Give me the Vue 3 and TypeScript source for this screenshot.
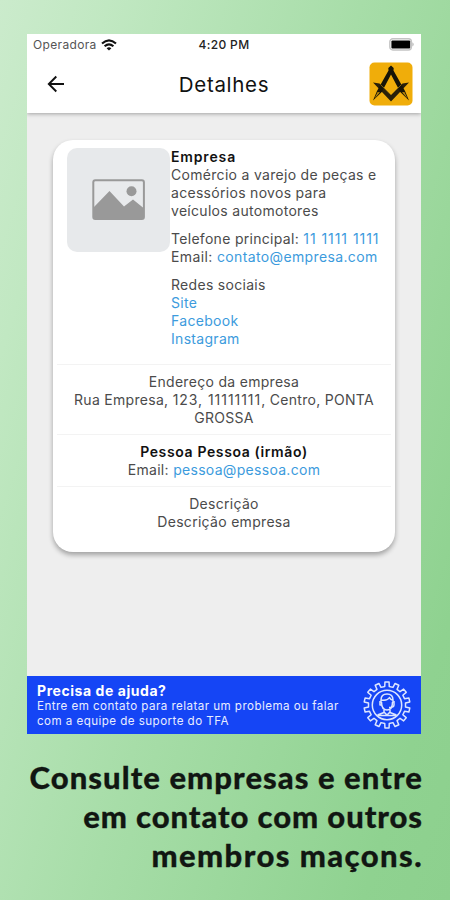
<script setup lang="ts">
interface Link { label: string; href: string }

const links: Link[] = [
  { label: 'Site', href: '#site' },
  { label: 'Facebook', href: '#facebook' },
  { label: 'Instagram', href: '#instagram' },
]

function gearPath(teeth: number, cx: number, cy: number, outer: number, inner: number): string {
  const step = (Math.PI * 2) / teeth
  const at = (r: number, a: number): string =>
    `${(cx + r * Math.cos(a)).toFixed(2)} ${(cy + r * Math.sin(a)).toFixed(2)}`
  const parts: string[] = []
  for (let i = 0; i < teeth; i++) {
    const a = i * step - Math.PI / 2
    parts.push(at(inner, a - step * 0.27), at(outer, a - step * 0.2), at(outer, a + step * 0.2), at(inner, a + step * 0.27))
  }
  return `M${parts.join('L')}Z`
}

const gear = gearPath(14, 24, 24, 23, 18.6)
</script>

<template>
  <main class="poster">
    <section class="phone">
      <header class="top">
        <div class="status">
          <div class="carrier">
            <span>Operadora</span>
            <svg width="16" height="12" viewBox="0 0 16 12" fill="none" stroke="#111" stroke-width="2.1">
              <path d="M1 4.6Q8-1.8 15 4.6M3.6 7.3Q8 3.4 12.4 7.3" />
              <path d="M8 11.6L5.6 9.2Q8 7.3 10.4 9.2Z" fill="#111" stroke="none" />
            </svg>
          </div>
          <span class="time">4:20 PM</span>
          <svg class="battery" width="26" height="13" viewBox="0 0 26 13">
            <rect x=".8" y=".8" width="21.6" height="11.2" rx="3" fill="#fff" stroke="#c4c4c4" stroke-width="1.4" />
            <rect x="2.4" y="2.6" width="18.8" height="7.8" rx="1" fill="#000" />
            <path d="M23.4 4.2Q26 6.4 23.4 8.6Z" fill="#b5b5b5" />
          </svg>
        </div>
        <div class="bar">
          <svg class="back" width="18" height="18" viewBox="0 0 18 18" fill="none" stroke="#111" stroke-width="1.9">
            <path d="M17 9H2M9.300 1.500L1.800 9l7.500 7.500" />
          </svg>
          <h1>Detalhes</h1>
          <svg class="logo" width="44" height="44" viewBox="0 0 44 44">
            <rect x=".5" y=".5" width="43" height="43" rx="5" fill="#f0ad0a" />
            <path d="M4 20.600L22 39.400 40 20.600 33.500 21.500 22 33 10.500 21.500Z" fill="#29200a" />
            <path d="M22 3.600l2.700 2.500-.2 2.300L36 29 40 38.500 31.200 30 22 12.500 12.800 30 4 38.500 8 29 19.500 8.400l-.2-2.300Z" fill="#171407" />
            <path d="M11 30.200L5.500 36.500 8.600 30ZM33 30.200l5.500 6.300-3.100-6.500Z" fill="#f0ad0a" opacity=".75" />
            <path d="M12 23l8.500 8.700M32 23l-6 6" stroke="#8a670b" stroke-width=".9" />
          </svg>
        </div>
      </header>

      <div class="content">
        <article class="card">
          <div class="summary">
            <div class="thumb">
              <svg width="54" height="42" viewBox="0 0 54 42">
                <rect x="1.3" y="1.3" width="50.6" height="38.6" rx="2" fill="#e8eaec" stroke="#999" stroke-width="2" />
                <path d="M2 28L17.5 12 32 27.5 41 20.5 51.5 29V39H2Z" fill="#999" />
                <circle cx="39.5" cy="12.2" r="5" fill="#999" />
              </svg>
            </div>
            <div class="info">
              <div><strong class="name">Empresa</strong></div>
              <div>Comércio a varejo de peças e</div>
              <div>acessórios novos para</div>
              <div>veículos automotores</div>
              <div class="gap">Telefone principal: <a class="digits">11 1111 1111</a></div>
              <div class="mail">Email: <a>contato@empresa.com</a></div>
              <div class="gap">Redes sociais</div>
              <div v-for="link in links" :key="link.label"><a :href="link.href">{{ link.label }}</a></div>
            </div>
          </div>
          <div class="row">
            <div>Endereço da empresa</div>
            <div>Rua Empresa, <span class="digits">123, 11111111</span>, Centro, PONTA<br />GROSSA</div>
          </div>
          <div class="row">
            <strong class="person">Pessoa Pessoa (irmão)</strong>
            <div>Email: <a>pessoa@pessoa.com</a></div>
          </div>
          <div class="row">
            <div>Descrição</div>
            <div>Descrição empresa</div>
          </div>
        </article>
      </div>

      <footer class="help">
        <div class="help-text">
          <strong>Precisa de ajuda?</strong>
          <span>Entre em contato para relatar um problema ou falar<br />com a equipe de suporte do TFA</span>
        </div>
        <svg width="48" height="48" viewBox="0 0 48 48" fill="none" stroke="#dce5ff" stroke-width="1.5" stroke-linejoin="round">
          <path :d="gear" />
          <circle cx="24" cy="24" r="14.7" />
          <path d="M18 22v-3q0-6 6-6t6 6v3M18.500 19q6 1 8-2.500 1 2.500 3.500 2.500M18.500 21q0 8 5.500 8t5.500-8" />
          <path d="M17 20v4h2M31 20v4q0 2.500-5 2.500M21 29v2.500L14.500 34M27 29v2.500L33.500 34M21 31l3 3 3-3M14.500 34.500h19" />
        </svg>
      </footer>
    </section>
    <p class="caption">
      <span class="c1">Consulte empresas e entre</span>
      <span class="c2">em contato com outros</span>
      <span class="c3">membros maçons.</span>
    </p>
  </main>
</template>

<style>
body { margin: 0; }
</style>

<style scoped>
.poster {
  box-sizing: border-box;
  width: 450px;
  height: 900px;
  padding: 34px 29px 0 27px;
  background: linear-gradient(107deg, #cbebcc 0%, #c1e8c2 15%, #a7dda8 50%, #8fd290 88%, #8dd08e 100%);
  font-family: Inter, "Liberation Sans", sans-serif;
  overflow: hidden;
}
.phone { width: 394px; height: 700px; display: flex; flex-direction: column; background: #eee; }
.top { height: 79px; flex: none; background: #fff; box-shadow: 0 1px 4px rgba(0, 0, 0, .32); clip-path: inset(0 0 -8px 0); }
.status {
  display: grid;
  grid-template-columns: 1fr auto 1fr;
  align-items: center;
  height: 21px;
  padding: 0 6px 0 6px;
  font-size: 12px;
  color: #333;
}
.carrier { display: flex; align-items: center; gap: 4px; letter-spacing: .34px; color: #555; }
.time { font-size: 12px; font-weight: 500; letter-spacing: .35px; color: #222; }
.battery { justify-self: end; }
.bar { display: grid; grid-template-columns: 44px 1fr 44px; align-items: center; height: 58px; padding: 0 8px 0 20px; }
h1 { margin: 0 12px 0 0; font-size: 20.5px; font-weight: 400; letter-spacing: .7px; text-align: center; color: #111; }
.content { flex: 1; padding: 27px 26px 0; }
.card {
  box-sizing: border-box;
  width: 342px;
  height: 412px;
  padding: 8px 4px 0;
  border-radius: 20px;
  background: #fff;
  box-shadow: 0 3px 5px rgba(0, 0, 0, .32);
  font-size: 14px;
  line-height: 18px;
  letter-spacing: .3px;
  color: #4b4b4b;
  white-space: nowrap;
}
.summary { display: flex; gap: 1px; height: 216px; padding-left: 10px; }
.thumb { display: grid; place-items: center; width: 103px; height: 104px; border-radius: 10px; background: #e7e9eb; }
.gap { margin-top: 10px; }
strong { font-weight: 600; color: #111; }
.name { letter-spacing: .85px; }
.person { letter-spacing: .63px; }
.digits { letter-spacing: .95px; }
.mail { letter-spacing: .37px; }
a { color: #3c9bdd; text-decoration: none; }
.row { border-top: 1px solid #f3f3f3; padding: 8px 0 7px; text-align: center; }
.help {
  box-sizing: border-box;
  display: flex;
  align-items: center;
  justify-content: space-between;
  height: 58px;
  padding: 0 10px;
  background: #1545f5;
  color: #e9edff;
}
.help-text { display: flex; flex-direction: column; font-size: 11.6px; line-height: 15px; letter-spacing: .45px; white-space: nowrap; }
.help-text strong { font-size: 14px; line-height: 17px; font-weight: 700; letter-spacing: .56px; color: #fff; }
.caption {
  display: flex;
  flex-direction: column;
  align-items: flex-end;
  margin: 24px -2px 0 -20px;
  font-family: Lato, sans-serif;
  font-size: 31px;
  font-weight: 900;
  line-height: 39px;
  color: #111612;
  white-space: nowrap;
  -webkit-text-stroke: .3px #111612;
}
.c1 { letter-spacing: 1.06px; }
.c2 { letter-spacing: .92px; }
.c3 { letter-spacing: 1.42px; }
</style>
